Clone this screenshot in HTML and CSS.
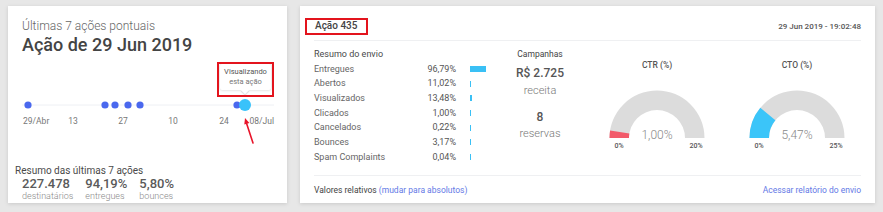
FILE: index.html
```html
<!DOCTYPE html>
<html lang="pt-BR">
<head>
<meta charset="utf-8">
<title>Ações pontuais</title>
<link rel="stylesheet" href="styles.css">
</head>
<body>
<main class="page">
  <section class="card card-left">
    <header class="lc-head">
      <div class="lc-sub">Últimas 7 ações pontuais</div>
      <h1 class="lc-title">Ação de 29 Jun 2019</h1>
    </header>
    <div class="timeline">
      <svg class="tl-svg" width="280" height="75" viewBox="0 0 280 75">
        <line class="tl-axis" x1="14" y1="49" x2="266" y2="49"/>
        <circle class="tl-dot" cx="20" cy="49" r="3.6"/>
        <circle class="tl-dot" cx="97" cy="49" r="3.6"/>
        <circle class="tl-dot" cx="107" cy="49" r="3.6"/>
        <circle class="tl-dot" cx="120" cy="49" r="3.6"/>
        <circle class="tl-dot" cx="132" cy="49" r="3.6"/>
        <circle class="tl-dot" cx="229" cy="49" r="3.6"/>
        <circle class="tl-cur" cx="237" cy="49" r="6"/>
        <text class="tl-lbl" x="15" y="68">29/Abr</text>
        <text class="tl-lbl" x="65" y="68" text-anchor="middle">13</text>
        <text class="tl-lbl" x="115" y="68" text-anchor="middle">27</text>
        <text class="tl-lbl" x="165" y="68" text-anchor="middle">10</text>
        <text class="tl-lbl" x="216" y="68" text-anchor="middle">24</text>
        <text class="tl-lbl" x="266" y="68" text-anchor="end">08/Jul</text>
      </svg>
      <div class="tooltip">
        <span class="tt-l1">Visualizando</span>
        <span class="tt-l2">esta ação</span>
      </div>
      <div class="annot annot-tip"></div>
      <svg class="arrow" width="22" height="34" viewBox="0 0 22 34">
        <line x1="16" y1="29" x2="9.6" y2="9.5" stroke="#e8142a" stroke-width="1.6" stroke-linecap="round"/>
        <polygon points="8,4 12.4,9 7.3,10.6" fill="#e8142a"/>
      </svg>
    </div>
    <div class="lc-summary">
      <div class="lcs-title">Resumo das últimas 7 ações</div>
      <div class="lcs-stats">
        <div class="stat"><div class="stat-v">227.478</div><div class="stat-l">destinatários</div></div>
        <div class="stat"><div class="stat-v">94,19%</div><div class="stat-l">entregues</div></div>
        <div class="stat"><div class="stat-v">5,80%</div><div class="stat-l">bounces</div></div>
      </div>
    </div>
  </section>

  <section class="card card-right">
    <header class="rc-head">
      <span class="rc-title">Ação 435<span class="annot annot-title"></span></span>
      <span class="rc-date">29 Jun 2019 - 19:02:48</span>
    </header>
    <div class="rc-body">
      <div class="send">
        <div class="send-title">Resumo do envio</div>
        <div class="send-row"><span>Entregues</span><span class="s-pct">96,79%</span><span class="s-bar"><i style="width:16px"></i></span></div>
        <div class="send-row"><span>Abertos</span><span class="s-pct">11,02%</span><span class="s-bar"><i style="width:1px"></i></span></div>
        <div class="send-row"><span>Visualizados</span><span class="s-pct">13,48%</span><span class="s-bar"><i style="width:2px"></i></span></div>
        <div class="send-row"><span>Clicados</span><span class="s-pct">1,00%</span><span class="s-bar"><i style="width:1px"></i></span></div>
        <div class="send-row"><span>Cancelados</span><span class="s-pct">0,22%</span><span class="s-bar"><i style="width:1px"></i></span></div>
        <div class="send-row"><span>Bounces</span><span class="s-pct">3,17%</span><span class="s-bar"><i style="width:1px"></i></span></div>
        <div class="send-row"><span>Spam Complaints</span><span class="s-pct">0,04%</span><span class="s-bar"><i style="width:1px"></i></span></div>
      </div>
      <div class="camp">
        <div class="camp-title">Campanhas</div>
        <div class="camp-v">R$ 2.725</div>
        <div class="camp-l">receita</div>
        <div class="camp-v camp-v2">8</div>
        <div class="camp-l camp-l2">reservas</div>
      </div>
      <div class="gauges">
        <figure class="gauge">
          <figcaption class="g-title">CTR (%)</figcaption>
          <svg class="g-svg" width="120" height="80" viewBox="0 0 120 80">
            <path class="g-track" d="M12.5 67 A47.5 47.5 0 0 1 107.5 67 L88 67 A28 28 0 0 0 32 67 Z"/>
            <path class="g-red" d="M12.5 67 A47.5 47.5 0 0 1 13.08 59.57 L32.34 62.62 A28 28 0 0 0 32 67 Z"/>
            <text class="g-val" x="60" y="68" text-anchor="middle">1,00%</text>
            <text class="g-lim" x="22" y="77" text-anchor="middle">0%</text>
            <text class="g-lim" x="99" y="77" text-anchor="middle">20%</text>
          </svg>
        </figure>
        <figure class="gauge">
          <figcaption class="g-title">CTO (%)</figcaption>
          <svg class="g-svg" width="120" height="80" viewBox="0 0 120 80">
            <path class="g-track" d="M12.5 67 A47.5 47.5 0 0 1 107.5 67 L88 67 A28 28 0 0 0 32 67 Z"/>
            <path class="g-blue" d="M12.5 67 A47.5 47.5 0 0 1 23.3 36.85 L38.36 49.23 A28 28 0 0 0 32 67 Z"/>
            <text class="g-val" x="60" y="68" text-anchor="middle">5,47%</text>
            <text class="g-lim" x="22" y="77" text-anchor="middle">0%</text>
            <text class="g-lim" x="99" y="77" text-anchor="middle">25%</text>
          </svg>
        </figure>
      </div>
    </div>
    <footer class="rc-foot">
      <span>Valores relativos <a href="#">(mudar para absolutos)</a></span>
      <a href="#">Acessar relatório do envio</a>
    </footer>
  </section>
</main>
</body>
</html>
```

FILE: styles.css
```css
* { box-sizing: border-box; margin: 0; padding: 0; }
html, body { height: 100%; }
body {
  background: #e7e7e7;
  font-family: Roboto, "Noto Sans", "Liberation Sans", Arial, sans-serif;
  color: #555;
  overflow: hidden;
}
.page { display: flex; gap: 13px; padding: 6px 0 0 8px; }
.card {
  background: #fff;
  height: 197px;
  box-shadow: 0 1px 4px rgba(0, 0, 0, .13);
  display: flex;
  flex-direction: column;
}

/* left card */
.card-left { width: 279px; }
.lc-head { padding: 13px 14px 0; }
.lc-sub { font-size: 12px; line-height: 15px; font-weight: 300; color: #666; }
.lc-title { font-size: 18px; line-height: 22px; font-weight: 500; color: #444; }
.timeline { position: relative; height: 75px; }
.tl-svg { display: block; }
.tl-axis { stroke: #eef0f4; stroke-width: 1; }
.tl-dot { fill: #4a68ee; }
.tl-cur { fill: #39c2fa; }
.tl-lbl { font-family: Roboto, "Noto Sans", sans-serif; font-size: 8.5px; fill: #777; }
.tooltip {
  position: absolute; left: 212px; top: 8px; width: 51px; height: 26px;
  background: #fff; border-radius: 2px;
  box-shadow: 0 0 3px rgba(0, 0, 0, .22);
  text-align: center; padding-top: 3px;
  font-size: 7.5px; line-height: 10px;
}
.tooltip::after {
  content: ""; position: absolute; left: 22px; bottom: -3px;
  width: 6px; height: 6px; background: #fff; transform: rotate(45deg);
  box-shadow: 1px 1px 1px rgba(0, 0, 0, .12);
}
.tt-l1 { display: block; color: #555; }
.tt-l2 { display: block; color: #777; }
.annot { position: absolute; border: 2px solid #e3141d; }
.annot-tip { left: 209px; top: 6px; width: 57px; height: 35px; }
.arrow { position: absolute; left: 229px; top: 58px; overflow: visible; }
.lc-summary { margin-top: auto; padding: 0 7px 1px; }
.lcs-title { font-size: 10px; line-height: 12px; color: #4a4a4a; }
.lcs-stats { display: flex; gap: 12px; padding-left: 7px; }
.stat-v { font-size: 13px; line-height: 14px; font-weight: 500; color: #5a5a5a; }
.stat-l { font-size: 9px; line-height: 11px; font-weight: 300; color: #8a8a8a; }

/* right card */
.card-right { width: 575px; }
.rc-head {
  margin: 0 14px; height: 35px; padding-top: 6px;
  border-bottom: 1px solid #eff0f2;
  display: flex; align-items: center; justify-content: space-between;
}
.rc-title { position: relative; margin-left: 1px; font-size: 10px; line-height: 14px; font-weight: 500; color: #444; }
.annot-title { left: -10px; right: -11px; top: -1px; bottom: -2px; }
.rc-date { font-size: 8px; font-weight: 500; color: #555; }
.rc-body { display: flex; padding: 6px 14px 0; }
.send { width: 176px; font-size: 9px; color: #666; }
.send-title, .send-row { height: 14.7px; line-height: 14.7px; }
.send-title { color: #4a4a4a; }
.send-row { display: grid; grid-template-columns: 100px 42px 34px; align-items: center; }
.s-pct { text-align: right; color: #555; }
.s-bar { padding-left: 14px; display: flex; }
.s-bar i { display: block; height: 6px; background: #3ac0f5; }
.camp { width: 100px; text-align: center; }
.camp-title { height: 14.7px; line-height: 14.7px; font-size: 8.5px; font-weight: 400; color: #444; }
.camp-v { margin-top: 4.3px; font-size: 12px; line-height: 14px; font-weight: 500; color: #555; }
.camp-l { margin-top: 4px; font-size: 11px; line-height: 14px; font-weight: 300; color: #777; }
.camp-v2 { margin-top: 12px; }
.camp-l2 { margin-top: 3px; }
.gauges { display: flex; gap: 20px; margin-left: 7px; }
.gauge { width: 120px; text-align: center; }
.g-title { margin-top: 12px; font-size: 8.5px; line-height: 12px; font-weight: 500; color: #555; }
.g-svg { display: block; }
.g-track { fill: #dcdcdc; }
.g-red { fill: #f25a6a; }
.g-blue { fill: #3bc5f9; }
.g-val { font-family: Roboto, "Noto Sans", sans-serif; font-size: 12px; font-weight: 300; fill: #888; }
.g-lim { font-family: Roboto, "Noto Sans", sans-serif; font-size: 7px; font-weight: 500; fill: #555; }
.rc-foot {
  margin: auto 14px 0; height: 28px;
  border-top: 1px solid #eff0f2;
  display: flex; align-items: center; justify-content: space-between;
  font-size: 8.5px; color: #444;
}
.rc-foot a { color: #6479e6; text-decoration: none; }
```
